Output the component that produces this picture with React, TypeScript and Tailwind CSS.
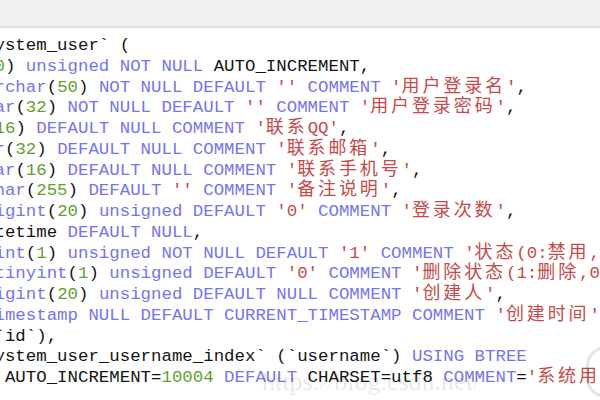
import React from "react";

type Seg = [string, string];

const lines: Seg[][] = [
  [["t", "ystem_user` ("]],
  [["n", "0"], ["t", ") "], ["k", "unsigned NOT NULL "], ["t", "AUTO_INCREMENT,"]],
  [["k", "rchar"], ["t", "("], ["n", "50"], ["t", ") "], ["k", "NOT NULL DEFAULT "], ["s", "''"], ["k", " COMMENT "], ["s", "'用户登录名'"], ["t", ","]],
  [["k", "ar"], ["t", "("], ["n", "32"], ["t", ") "], ["k", "NOT NULL DEFAULT "], ["s", "''"], ["k", " COMMENT "], ["s", "'用户登录密码'"], ["t", ","]],
  [["n", "16"], ["t", ") "], ["k", "DEFAULT NULL COMMENT "], ["s", "'联系QQ'"], ["t", ","]],
  [["k", "r"], ["t", "("], ["n", "32"], ["t", ") "], ["k", "DEFAULT NULL COMMENT "], ["s", "'联系邮箱'"], ["t", ","]],
  [["k", "ar"], ["t", "("], ["n", "16"], ["t", ") "], ["k", "DEFAULT NULL COMMENT "], ["s", "'联系手机号'"], ["t", ","]],
  [["k", "har"], ["t", "("], ["n", "255"], ["t", ") "], ["k", "DEFAULT "], ["s", "''"], ["k", " COMMENT "], ["s", "'备注说明'"], ["t", ","]],
  [["k", "igint"], ["t", "("], ["n", "20"], ["t", ") "], ["k", "unsigned DEFAULT "], ["s", "'0'"], ["k", " COMMENT "], ["s", "'登录次数'"], ["t", ","]],
  [["t", "tetime "], ["k", "DEFAULT NULL"], ["t", ","]],
  [["k", "int"], ["t", "("], ["n", "1"], ["t", ") "], ["k", "unsigned NOT NULL DEFAULT "], ["s", "'1'"], ["k", " COMMENT "], ["s", "'状态(0:禁用,1:启用)'"], ["t", ","]],
  [["k", "tinyint"], ["t", "("], ["n", "1"], ["t", ") "], ["k", "unsigned DEFAULT "], ["s", "'0'"], ["k", " COMMENT "], ["s", "'删除状态(1:删除,0:未删除)'"], ["t", ","]],
  [["k", "igint"], ["t", "("], ["n", "20"], ["t", ") "], ["k", "unsigned DEFAULT NULL COMMENT "], ["s", "'创建人'"], ["t", ","]],
  [["k", "imestamp NULL DEFAULT CURRENT_TIMESTAMP COMMENT "], ["s", "'创建时间'"], ["t", ","]],
  [["t", "`id`),"]],
  [["t", "ystem_user_username_index` (`username`) "], ["k", "USING BTREE"]],
  [["t", " AUTO_INCREMENT="], ["n", "10004"], ["t", " "], ["k", "DEFAULT "], ["t", "CHARSET=utf8 "], ["k", "COMMENT"], ["t", "="], ["s", "'系统用户表'"], ["t", ";"]],
];

const colorClass: Record<string, string> = {
  t: "text-[#141414]",
  k: "text-[#7474ec]",
  n: "text-[#5f9f30]",
  s: "text-[#c44a4a]",
};

function renderText(text: string) {
  const parts = text.split(/([\u4e00-\u9fff]+)/);
  return parts.map((p, i) =>
    /[\u4e00-\u9fff]/.test(p) ? (
      <span
        key={i}
        className="font-['Noto_Sans_CJK_SC',sans-serif] text-[18px] leading-[0px] tracking-[2.88px]"
      >
        {p}
      </span>
    ) : (
      <React.Fragment key={i}>{p}</React.Fragment>
    )
  );
}

export default function App() {
  return (
    <div className="relative w-[600px] h-[400px] overflow-hidden bg-white">
      <div className="h-[28px] bg-[#f0f0f0] border-b-2 border-[#e0e0e0]" />
      <div className="pt-[8px] ml-[-5.5px] font-['Liberation_Mono',monospace] text-[17.4px] leading-[20.75px] whitespace-pre">
        {lines.map((segs, i) => (
          <div key={i} className="h-[20.75px]">
            {segs.map(([c, t], j) => (
              <span key={j} className={colorClass[c]}>
                {renderText(t)}
              </span>
            ))}
          </div>
        ))}
      </div>
      <div className="absolute left-[262px] top-[362px] font-['Liberation_Serif',serif] text-[26px] text-black/10 whitespace-pre pointer-events-none">
        https://blog.csdn.net/
      </div>
      <div className="absolute left-[586px] top-[346px] w-[40px] h-[52px] rounded-full border-[3px] border-black/10" />
    </div>
  );
}
